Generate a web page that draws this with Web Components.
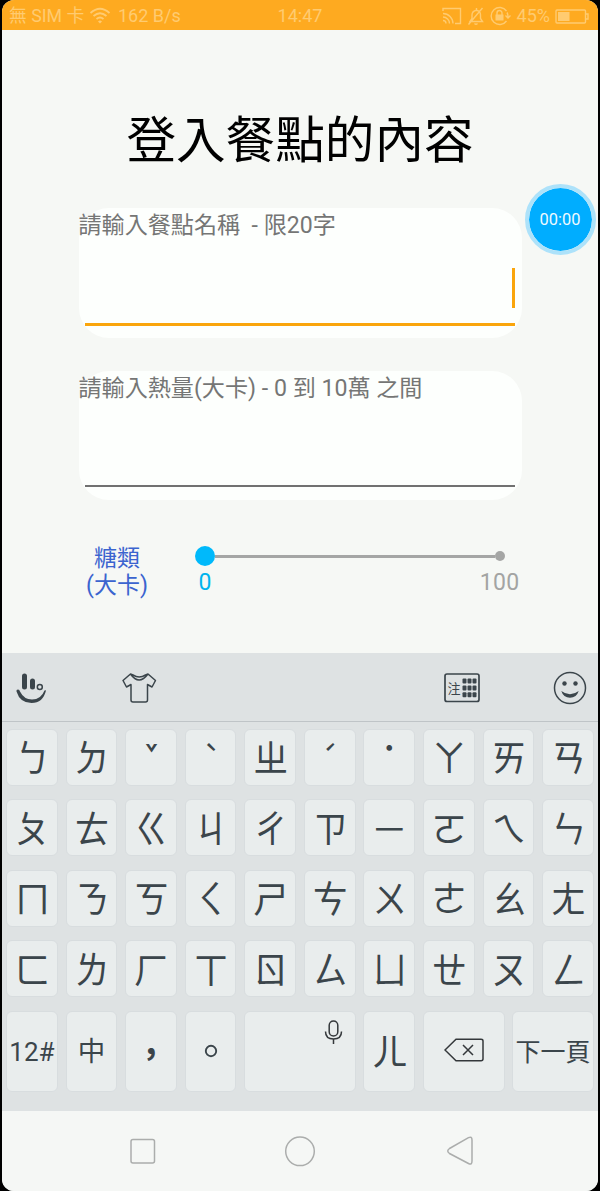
<!DOCTYPE html>
<html lang="zh-Hant">
<head>
<meta charset="utf-8">
<title>登入餐點的內容</title>
<style>
html,body{margin:0;background:#000}
body{width:600px;height:1191px;overflow:hidden;font-family:Roboto,"Noto Sans CJK TC",sans-serif}
</style>
</head>
<body>
<meal-app></meal-app>
<script>
const define = (name, html, setup) => {
  const t = document.createElement('template');
  t.innerHTML = html;
  customElements.define(name, class extends HTMLElement {
    constructor() {
      super();
      this.attachShadow({mode: 'open'}).append(t.content.cloneNode(true));
    }
    connectedCallback() { if (setup) setup(this, this.shadowRoot); }
  });
};

define('status-bar', `
<style>
:host{display:flex;justify-content:space-between;align-items:center;height:30px;box-sizing:border-box;padding:2px 9px 0 7px;background:#feaa20;color:#ffcb70;font-size:18px;line-height:26px;white-space:pre;font-weight:400}
.g{display:flex;align-items:center;width:200px}
.r{justify-content:flex-end}
svg{display:block;flex:none;fill:none;stroke:#ffcb70;stroke-width:1.4}
.sim{font-size:17.8px;width:80px}
.wifi{margin-right:7px}
.time{margin-left:2px}
.pct{margin:0 5px 0 6px}
</style>
<div class="g"><span class="sim">無 SIM 卡</span>
<svg class="wifi" width="22" height="18" viewBox="0 0 22 18"><path d="M1.5 6Q11-2.5 20.5 6M4.5 9Q11 3.500 17.500 9M7.500 12Q11 9 14.500 12" stroke-width="1.800"/><path d="M9 14.500Q11 12.500 13 14.500L11 16.500Z" fill="#ffcb70" stroke="none"/></svg><span>162 B/s</span></div>
<span class="time">14:47</span>
<div class="g r">
<svg width="20" height="18" viewBox="0 0 20 18"><path d="M1 4V1.500H18.500V16.500H13M1 6.500A10 10 0 0 1 11 16.500M1 10A6.500 6.500 0 0 1 7.500 16.500M1 13.500A3 3 0 0 1 4 16.500"/></svg>
<svg width="18" height="19" viewBox="0 0 18 19" style="margin-left:5px"><path d="M3 14.500H15.500L13.500 11.500V8Q13.500 4 9.500 3.200 5 4 5 8V11.500ZM7.500 16.500Q9 18 10.500 16.500M15.500 1 1.500 17.500M9.500 1V3"/></svg>
<svg width="22" height="20" viewBox="0 0 22 20" style="margin-left:4px"><path d="M17.500 5A8.500 8.500 0 1 0 17.500 15M18 6.500Q19 8 19 11M16.500 9.500 19 12 21.500 9.500"/><rect x="6.500" y="8.500" width="8" height="6" fill="#ffcb70" stroke="none"/><path d="M8 9V7A2.500 2.500 0 0 1 13 7V9"/></svg>
<span class="pct">45%</span>
<svg width="34" height="15" viewBox="0 0 34 15"><rect x="1" y="1" width="29.500" height="13" rx="1"/><path d="M31 5H33V10H31"/><rect x="3" y="3" width="11.500" height="9" fill="#ffcb70" stroke="none"/></svg>
</div>`);

define('meal-field', `
<style>
:host{display:flex;flex-direction:column;box-sizing:border-box;width:443px;height:129.500px;border-radius:30px;background:#fdfffd;position:relative}
.hint{font-size:23.1px;line-height:34px;color:#757675;white-space:pre;flex:1;padding-top:1px}
.line{height:2px;background:#717171;margin:0 6.500px 13.500px}
:host([active]) .line{height:3px;background:#faa50c;margin-bottom:11.500px}
.caret{display:none;position:absolute;right:6.500px;top:60px;width:3px;height:40px;background:#faa50c}
:host([active]) .caret{display:block}
</style>
<div class="hint"><slot></slot></div><div class="caret"></div><div class="line"></div>`);

define('sugar-slider', `
<style>
:host{display:grid;grid-template-columns:77px 1fr;width:443px;height:60px}
.label{font-size:23px;line-height:27px;color:#3b64cf;text-align:center;padding-top:1.500px}
.control{margin-left:39.500px;padding-top:3px}
.track{display:flex;align-items:center;height:20px}
.thumb{width:20px;height:20px;border-radius:50%;background:#00b9fb}
.rail{width:280px;height:3px;background:#a5a6a5}
.end{width:10px;height:10px;border-radius:50%;background:#a5a6a5}
.values{display:flex;justify-content:space-between;font-size:23px;line-height:28px;color:#a3a4a3;padding-top:3px;width:324.500px;letter-spacing:.3px}
.values b{font-weight:400;color:#00b4ee;padding-left:3.500px}
</style>
<div class="label"><slot></slot></div>
<div class="control"><div class="track"><i class="thumb"></i><i class="rail"></i><i class="end"></i></div><div class="values"><b>0</b><span>100</span></div></div>`);

define('record-bubble', `
<style>
:host{display:flex;align-items:center;justify-content:center;position:absolute;left:522.500px;top:183.500px;width:71px;height:71px;box-sizing:border-box;padding-top:1px;border-radius:50%;border:4px solid #ade2fa;background:#00adff;background-clip:padding-box;color:#effaff;font-size:16.400px;line-height:20px}
</style><slot></slot>`);

define('meal-form', `
<style>
:host{display:flex;flex-direction:column;align-items:center;box-sizing:border-box;height:623px;background:#f6f8f5;padding-top:75px}
h1{margin:0;font-size:49.600px;line-height:72px;font-weight:400;color:#000;height:103px}
meal-field{margin-bottom:33px}
sugar-slider{margin-top:10px}
</style>
<h1>登入餐點的內容</h1>
<meal-field active>請輸入餐點名稱  - 限20字</meal-field>
<meal-field>請輸入熱量(大卡) - 0 到 10萬 之間</meal-field>
<sugar-slider>糖類<br>(大卡)</sugar-slider>`);

define('key-tools', `
<style>
:host{display:flex;align-items:center;height:69px;box-sizing:border-box;padding:2px 11.500px 0 14px;border-bottom:1px solid #bfc4c7}
svg{display:block;fill:none;stroke:#3b454b;stroke-width:1.500;flex:none}
.shirt{margin-left:73.500px}
.kb{margin-left:auto;margin-right:72px}
text{font:13px "Noto Sans CJK TC",sans-serif;fill:#3b454b;stroke:none}
</style>
<svg width="31" height="32" viewBox="0 0 31 32"><path d="M8.500 4V15M16.500 9V15" stroke-width="5" stroke-linecap="round"/><circle cx="23.800" cy="15" r="2.500"/><path d="M.5 19.500Q0 17.500 2 17.500 3.500 17.500 4 19.500 8 27.500 16 27.500 25 27.500 28.500 18.500 29.500 17.800 30 18.500 27 31 15.500 31 4 31 .5 19.500Z" fill="#3b454b" stroke="none"/></svg>
<svg class="shirt" width="36" height="32" viewBox="0 0 36 32"><path d="M9.500 2 2 8.500 5.500 15 10 12.500V28Q10 30 12 30H24.500Q26.500 30 26.500 28V12.500L31 15 34.500 8.500 27 2 24.500 3Q18.200 7 12 3ZM9.500 2Q18 14 27 2" stroke-linejoin="round"/></svg>
<svg class="kb" width="38" height="32" viewBox="0 0 38 32"><rect x="2" y="2" width="34" height="27.500" rx="2" stroke-width="1.700"/><text x="4.500" y="20.500">注</text><g fill="#3b454b" stroke="none"><rect x="19.500" y="6.500" width="4" height="5" rx="1"/><rect x="24.500" y="6.500" width="4" height="5" rx="1"/><rect x="29.500" y="6.500" width="4" height="5" rx="1"/><rect x="19.500" y="13.500" width="4" height="5" rx="1"/><rect x="24.500" y="13.500" width="4" height="5" rx="1"/><rect x="29.500" y="13.500" width="4" height="5" rx="1"/><rect x="19.500" y="20.300" width="4" height="5" rx="1"/><rect x="24.500" y="20.300" width="4" height="5" rx="1"/><rect x="29.500" y="20.300" width="4" height="5" rx="1"/></g></svg>
<svg width="34" height="34" viewBox="0 0 34 34"><circle cx="17" cy="17" r="15.500"/><g fill="#3b454b" stroke="none"><circle cx="11.500" cy="12.500" r="2.200"/><circle cx="22.500" cy="12.500" r="2.200"/><path d="M8.300 20Q17 26.500 25.700 20 23.500 26.800 17 26.800 10.500 26.800 8.300 20Z"/></g></svg>`);

define('key-cap', `
<style>
:host{display:flex;align-items:center;justify-content:center;box-sizing:border-box;height:57px;border:1px solid #d8dddf;border-radius:6px;background:#e9eded;color:#3b454b;font:400 35px/50px "Noto Sans CJK TC",sans-serif;white-space:nowrap}
:host([tall]){height:81px}
span{display:block;transform:translate(.5px,-1px) scaleY(1.07)}
:host([plain]) span{transform:none}
:host([dash]) span{font-size:29px;transform:none}
:host([tone]) span{font-size:20px;font-weight:700;line-height:30px;transform:translate(.5px,-4.5px)}
:host([dot]) span{font-size:30px;line-height:32px;transform:translateY(-11px)}
:host([small]){font:400 24px/40px Roboto,"Noto Sans CJK TC",sans-serif}
:host([corner]){align-items:flex-start;justify-content:flex-end}
</style><span><slot></slot></span>`);

define('key-board', `
<style>
:host{display:block;height:458px;background:#dee2e3}
.keys{display:grid;grid-template-columns:repeat(10,51.800px);column-gap:7.780px;row-gap:13.500px;padding:6.500px 0 0 4px}
svg{display:block;fill:none;stroke:#34383b;stroke-width:1.500}
.mic{margin:8px 12px 0 0}
.last{grid-column:1/-1;display:grid;column-gap:7.780px;grid-template-columns:repeat(4,51.800px) 111.380px 51.800px 81.590px 81.590px}
.comma{display:block;font-size:34px;line-height:40px;font-weight:700;transform:translateY(-11px)}
</style>
<key-tools></key-tools><div class="keys"><div class="last">
<key-cap tall small plain style="font-size:26px;padding-top:2px">12#</key-cap><key-cap tall small plain style="font-size:27.500px;padding-top:2px">中</key-cap><key-cap tall plain><b class="comma">,</b></key-cap><key-cap tall plain><svg width="14" height="14" viewBox="0 0 14 14"><circle cx="7" cy="7" r="5.200" stroke="#3b454b" stroke-width="1.900"/></svg></key-cap>
<key-cap tall corner plain><svg class="mic" width="19" height="25" viewBox="0 0 19 25"><rect x="5.200" y="1" width="8.600" height="15" rx="4.300"/><path d="M1.500 11.500Q1.500 19 9.500 19 17.500 19 17.500 11.500M9.500 19V24"/></svg></key-cap>
<key-cap tall>ㄦ</key-cap><key-cap tall plain><svg width="40" height="24" viewBox="0 0 40 24" style="margin:0 0 3px 1px"><path d="M1 12 12 1.300H37Q39 1.300 39 3V21Q39 22.700 37 22.700H12ZM19 7 29 17M29 7 19 17"/></svg></key-cap><key-cap tall small plain style="font-size:25px;padding-top:3px">下一頁</key-cap></div></div>`, (host, root) => {
  const last = root.querySelector('.last');
  for (const ch of 'ㄅㄉˇˋㄓˊ˙ㄚㄞㄢㄆㄊㄍㄐㄔㄗ一ㄛㄟㄣㄇㄋㄎㄑㄕㄘㄨㄜㄠㄤㄈㄌㄏㄒㄖㄙㄩㄝㄡㄥ') {
    const k = document.createElement('key-cap');
    k.textContent = ch;
    if ('ˇˋˊ'.includes(ch)) k.setAttribute('tone', '');
    if (ch === '˙') k.setAttribute('dot', '');
    if (ch === '一') k.setAttribute('dash', '');
    last.before(k);
  }
});

define('nav-bar', `
<style>
:host{display:flex;align-items:center;justify-content:center;gap:128px;height:80px;box-sizing:border-box;background:#f5f7f5}
svg{display:block;fill:none;stroke:#abadac;stroke-width:1.500}
</style>
<svg width="32" height="32" viewBox="0 0 32 32"><rect x="7" y="4.500" width="23.500" height="23.500" rx="2"/></svg>
<svg width="32" height="32" viewBox="0 0 32 32"><circle cx="16" cy="16.300" r="14.300"/></svg>
<svg width="32" height="32" viewBox="0 0 32 32"><path d="M5.500 13.500 24.500 2.700Q28 1 28 5V26Q28 30.500 24.500 28.500L5.500 18.500Q2 16 5.500 13.500Z"/></svg>`);

define('meal-app', `
<style>
:host{display:block;width:596px;height:1191px;margin-left:2px;border-radius:12px;overflow:hidden;position:relative;background:#f6f8f5}
</style>
<status-bar></status-bar><meal-form></meal-form><key-board></key-board><nav-bar></nav-bar>
<record-bubble>00:00</record-bubble>`);
</script>
</body>
</html>
